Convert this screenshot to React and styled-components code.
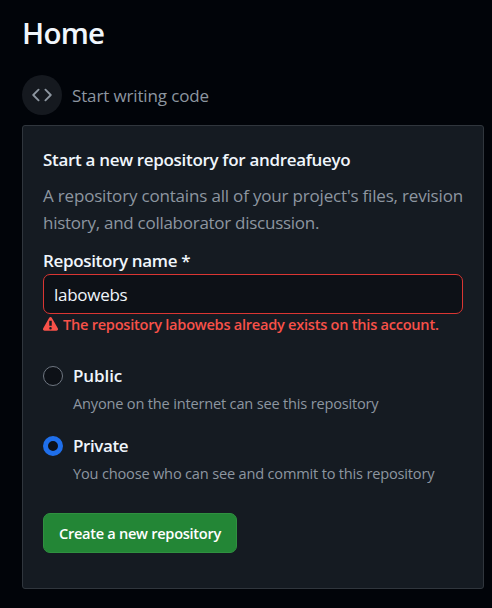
import React from "react";
import styled, { createGlobalStyle } from "styled-components";

const GlobalStyle = createGlobalStyle`
  * { box-sizing: border-box; }
  body {
    margin: 0;
    background: #010409;
    color: #f0f6fc;
    font-family: "Open Sans", "Noto Sans", sans-serif;
    font-size: 17px;
    line-height: 27px;
  }
`;

const Page = styled.main`
  display: flex;
  flex-direction: column;
  height: 608px;
  padding: 10px 8px 0 22px;
`;

const Title = styled.h1`
  margin: 0 0 20px;
  font-size: 29.5px;
  font-weight: 600;
  line-height: 45px;
  letter-spacing: -0.75px;
`;

const SectionHeader = styled.div`
  display: flex;
  align-items: center;
  gap: 10px;
  height: 40px;
  margin-bottom: 10px;
  color: #8d96a0;
  letter-spacing: -0.14px;
`;

const IconCircle = styled.span`
  display: grid;
  place-items: center;
  width: 40px;
  height: 40px;
  border-radius: 50%;
  background: #15191f;
`;

const Card = styled.form`
  height: 464px;
  padding: 20px;
  border: 1px solid #30363d;
  border-radius: 3px;
  background: #151b22;
`;

const CardTitle = styled.h2`
  margin: 0 0 9px;
  font-size: 17px;
  font-weight: 600;
  line-height: 27px;
  letter-spacing: -0.315px;
`;

const Description = styled.p`
  margin: 0 0 11px;
  color: #8d96a0;
  white-space: nowrap;
`;

const DescriptionLine = styled.span`
  display: block;
  letter-spacing: ${(p) => p.$tracking};
`;

const Label = styled.label`
  display: block;
  font-weight: 600;
  letter-spacing: -0.34px;
`;

const TextInput = styled.input`
  display: block;
  width: 100%;
  height: 40px;
  padding: 0 10px;
  border: 1px solid #da3633;
  border-radius: 7px;
  outline: none;
  background: #0d1117;
  color: #f0f6fc;
  font: inherit;
  letter-spacing: -0.28px;
`;

const ErrorMessage = styled.p`
  display: flex;
  align-items: center;
  gap: 5px;
  height: 20px;
  margin: 0 0 32px;
  color: #f85149;
  font-size: 14.6px;
  font-weight: 600;
  letter-spacing: -0.258px;
  white-space: nowrap;
`;

const Option = styled.label`
  display: grid;
  grid-template-columns: 20px 1fr;
  column-gap: 10px;
  height: 70px;
`;

const Radio = styled.input.attrs({ type: "radio" })`
  appearance: none;
  width: 20px;
  height: 20px;
  margin: 0;
  border: 1px solid #6e7681;
  border-radius: 50%;
  background: #0d1117;

  &:checked {
    border: 5px solid #1f6feb;
  }
`;

const OptionText = styled.span`
  display: flex;
  flex-direction: column;
  margin-top: -4px;
`;

const OptionName = styled.span`
  font-weight: 600;
  line-height: 28px;
  letter-spacing: ${(p) => p.$tracking};
`;

const OptionHint = styled.span`
  color: #8d96a0;
  font-size: 14.6px;
  letter-spacing: -0.192px;
  white-space: nowrap;
`;

const SubmitButton = styled.button`
  width: 194px;
  height: 40px;
  margin-top: 7px;
  padding: 0;
  border: 1px solid #2f9140;
  border-radius: 7px;
  background: #238636;
  color: #fff;
  font: 600 14.6px "Open Sans", "Noto Sans", sans-serif;
  letter-spacing: -0.29px;
  white-space: nowrap;
`;

const CodeIcon = () => (
  <svg width="20" height="20" viewBox="0 0 16 16" fill="#8d96a0">
    <path d="m11.28 3.22 4.25 4.25a.75.75 0 0 1 0 1.06l-4.25 4.25a.749.749 0 0 1-1.275-.326.749.749 0 0 1 .215-.734L13.94 8l-3.72-3.72a.749.749 0 0 1 .326-1.275.749.749 0 0 1 .734.215Zm-6.56 0a.751.751 0 0 1 1.042.018.751.751 0 0 1 .018 1.042L2.06 8l3.72 3.72a.749.749 0 0 1-.326 1.275.749.749 0 0 1-.734-.215L.47 8.53a.75.75 0 0 1 0-1.06Z" />
  </svg>
);

const AlertIcon = () => (
  <svg width="15" height="15" viewBox="0 0 12 12" fill="currentColor">
    <path d="M4.855.708c.5-.896 1.79-.896 2.29 0l4.675 8.351a1.312 1.312 0 0 1-1.146 1.954H1.33A1.313 1.313 0 0 1 .183 9.058ZM7 7V3H5v4Zm-1 3a1 1 0 1 0 0-2 1 1 0 0 0 0 2Z" />
  </svg>
);

export default function App() {
  return (
    <>
      <GlobalStyle />
      <Page>
        <Title>Home</Title>
        <SectionHeader>
          <IconCircle><CodeIcon /></IconCircle>
          Start writing code
        </SectionHeader>
        <Card>
          <CardTitle>Start a new repository for andreafueyo</CardTitle>
          <Description>
            <DescriptionLine $tracking="-0.182px">
              A repository contains all of your project's files, revision
            </DescriptionLine>
            <DescriptionLine $tracking="-0.27px">
              history, and collaborator discussion.
            </DescriptionLine>
          </Description>
          <Label htmlFor="repo-name">Repository name *</Label>
          <TextInput id="repo-name" defaultValue="labowebs" spellCheck={false} />
          <ErrorMessage>
            <AlertIcon />
            The repository labowebs already exists on this account.
          </ErrorMessage>
          <Option>
            <Radio name="visibility" />
            <OptionText>
              <OptionName $tracking="-0.1px">Public</OptionName>
              <OptionHint>Anyone on the internet can see this repository</OptionHint>
            </OptionText>
          </Option>
          <Option>
            <Radio name="visibility" defaultChecked />
            <OptionText>
              <OptionName $tracking="-0.4px">Private</OptionName>
              <OptionHint>You choose who can see and commit to this repository</OptionHint>
            </OptionText>
          </Option>
          <SubmitButton type="button">Create a new repository</SubmitButton>
        </Card>
      </Page>
    </>
  );
}
